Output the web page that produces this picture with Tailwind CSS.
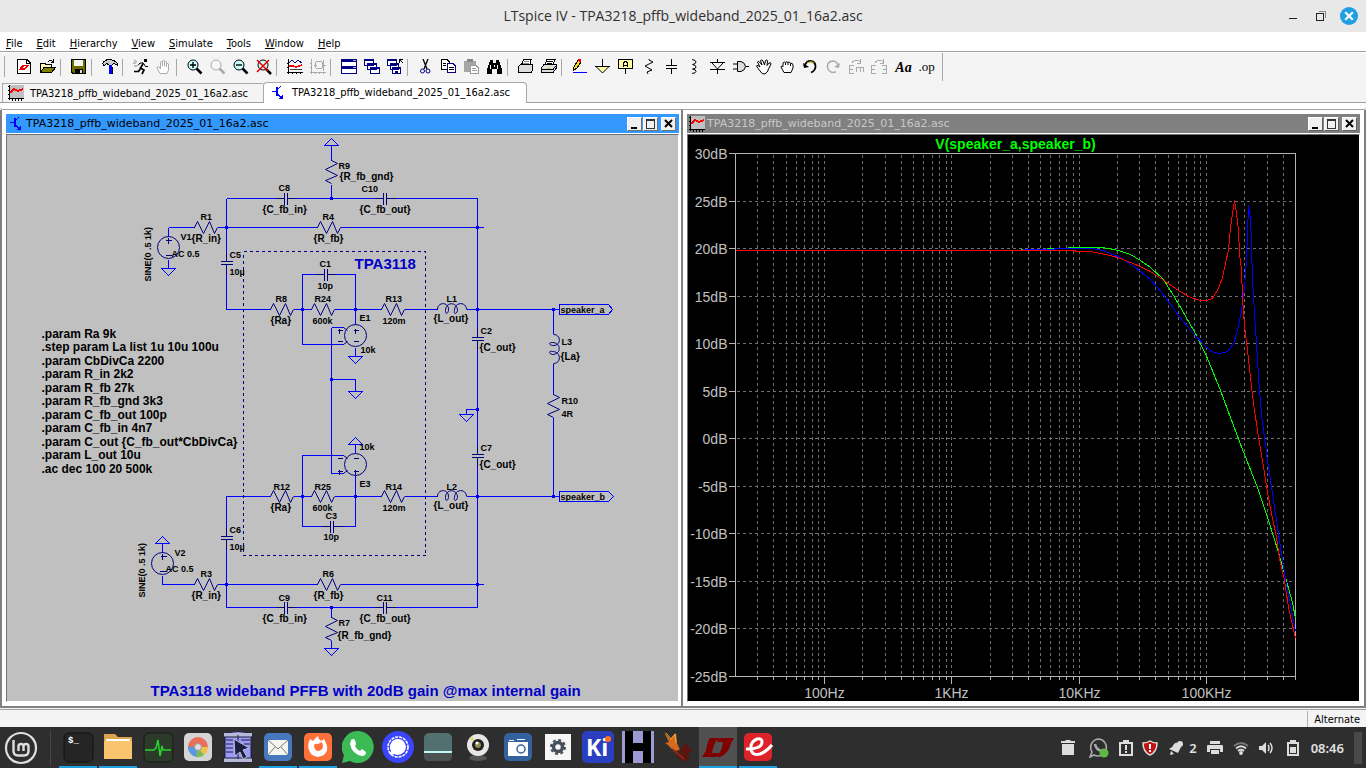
<!DOCTYPE html>
<html lang="en">
<head>
<meta charset="utf-8">
<title>LTspice IV</title>
<script src="https://cdn.jsdelivr.net/npm/@tailwindcss/browser@4"></script>
</head>
<body class="flex h-screen flex-col overflow-hidden bg-[#f4f4f4] font-['DejaVu_Sans_Condensed','DejaVu_Sans',sans-serif] text-[11px] leading-4 text-black">

<header class="grid h-8 shrink-0 grid-cols-[1fr_auto_1fr] items-center bg-[#e8e8e8]">
  <span></span>
  <h1 class="font-['Open_Sans',sans-serif] text-[14px] font-medium text-[#303030]">LTspice IV - TPA3218_pffb_wideband_2025_01_16a2.asc</h1>
  <div class="flex items-center justify-end gap-3 pr-2">
    <button aria-label="Minimize" class="size-4"><svg viewBox="0 0 16 16" class="size-4" shape-rendering="crispEdges"><path d="M5 10h8v1H5z" fill="#222"/></svg></button>
    <button aria-label="Restore" class="size-4"><svg viewBox="0 0 16 16" class="size-4" shape-rendering="crispEdges" fill="none"><path d="M7 3.500H13.500V10" stroke="#888"/><path d="M4.500 5.500H11.500V12.500H4.500z" stroke="#222"/></svg></button>
    <button aria-label="Close" class="size-[18px]"><svg viewBox="0 0 18 18" class="size-[18px]"><circle cx="9" cy="9" r="9" fill="#1d9fe2"/><path d="M6 6l6 6M12 6l-6 6" stroke="#fff" stroke-width="2.200" stroke-linecap="square"/></svg></button>
  </div>
</header>

<nav class="flex h-5 shrink-0 items-center gap-[14px] border-b border-[#a0a0a0] bg-white px-[6px] pt-1">
  <button><u>F</u>ile</button><button><u>E</u>dit</button><button><u>H</u>ierarchy</button><button><u>V</u>iew</button><button><u>S</u>imulate</button><button><u>T</u>ools</button><button><u>W</u>indow</button><button><u>H</u>elp</button>
</nav>

<div class="flex h-[30px] shrink-0 items-start border-t border-white pt-[6px] [&_button]:w-[23px] [&_button]:shrink-0 [&_button]:pl-1 [&_hr]:ml-px [&_hr]:mr-[6px] [&_hr]:h-[17px] [&_hr]:w-px [&_hr]:shrink-0 [&_hr]:border-0 [&_hr]:bg-[#a8a8a8] [&_svg]:size-4" role="toolbar">
  <span class="ml-1 mr-2 h-[21px] w-px -mt-[3px] bg-[#a8a8a8]"></span>
  <button aria-label="New schematic"><svg viewBox="0 0 16 16" shape-rendering="crispEdges"><path d="M.500 .500H10L13.500 4V14.500H.500z" fill="#fff" stroke="#000"/><path d="M9.500 .500V4.500H13.500" fill="none" stroke="#000"/><path d="M2 11l3-5h3L6 9h3l-2 2zM6 6h6L9 10H7L9 7z" fill="#e00"/></svg></button>
  <button aria-label="Open"><svg viewBox="0 0 16 16" shape-rendering="crispEdges"><path d="M.500 13V4.500H5L6 5.500H11.500V8" fill="#fffbb0" stroke="#000"/><path d="M.500 13.500L4 8.500H15.500L11.500 13.500z" fill="#808000" stroke="#000"/><path d="M8 2.500Q11 0 13 3M13.500 0V3.500H11" fill="none" stroke="#000"/></svg></button>
  <hr>
  <button aria-label="Save"><svg viewBox="0 0 16 16" shape-rendering="crispEdges"><path d="M.500 .500H14.500V14.500H2L.500 13z" fill="#6b6b00" stroke="#000"/><path d="M3 1h9v6H3z" fill="#f4f4f4"/><path d="M4 10h8v5H4z" fill="#000"/><path d="M9 11h2v3H9z" fill="#ddd"/></svg></button>
  <hr>
  <button aria-label="Control panel"><svg viewBox="0 0 16 16" shape-rendering="crispEdges"><path d="M.500 4.500Q3 .500 7 .500 12 .500 15.500 4.500V6L12 4.500 10 6H7L5 4.500 2 6.500z" fill="#ccc" stroke="#000"/><path d="M7 6h3v9H7z" fill="#00e"/><path d="M10.500 8V15" stroke="#000"/></svg></button>
  <hr>
  <button aria-label="Run"><svg viewBox="0 0 16 16"><path d="M11 0h3v3h-3z"/><path d="M10.500 4L7.500 9 11 11 9 15M7.500 9.500L5.500 12.500H1" fill="none" stroke="#000" stroke-width="1.700"/><path d="M10 4H7L5 6.500M11 5L12.500 7.500H15" fill="none" stroke="#000"/><path d="M1 1l3 2M0 4h3M1 7h3" stroke="#888"/></svg></button>
  <button aria-label="Halt"><svg viewBox="0 0 16 16" fill="#fff" stroke="#aaa"><path d="M4 14.500L1 9Q1 7 3 8L4.500 10V3Q5.500 2 6.500 3V7 2Q7.500 0 8.500 2V7 3Q9.500 1 10.500 3V8 5Q12 3.500 12.500 5V11L11 14.500z"/></svg></button>
  <hr>
  <button aria-label="Zoom in"><svg viewBox="0 0 16 16"><path d="M9.500 9.500L14.500 14.500" stroke="#000" stroke-width="2.500"/><circle cx="6" cy="6" r="5" fill="#cff" stroke="#000"/><path d="M3 6h6M6 3v6" stroke="#000" stroke-width="1.400"/></svg></button>
  <button aria-label="Pan"><svg viewBox="0 0 16 16"><path d="M9.500 9.500L14.500 14.500" stroke="#aaa" stroke-width="2.500"/><circle cx="6" cy="6" r="5" fill="#f8f8f8" stroke="#aaa"/></svg></button>
  <button aria-label="Zoom out"><svg viewBox="0 0 16 16"><path d="M9.500 9.500L14.500 14.500" stroke="#000" stroke-width="2.500"/><circle cx="6" cy="6" r="5" fill="#cff" stroke="#000"/><path d="M3 6h6" stroke="#000" stroke-width="1.400"/></svg></button>
  <button aria-label="Zoom to fit"><svg viewBox="0 0 16 16"><path d="M9.500 9.500L15 15" stroke="#000" stroke-width="2.500"/><circle cx="7" cy="6" r="5" fill="#cff" stroke="#000"/><path d="M1 1l11 11M13 1L1 13" stroke="#e00" stroke-width="1.600"/></svg></button>
  <hr>
  <button aria-label="Autorange"><svg viewBox="0 0 16 16" shape-rendering="crispEdges" fill="none"><path d="M1.500 0V15M0 13.500H16M0 4.500H2M0 8.500H2M5.500 13V15M9.500 13V15M13.500 13V15" stroke="#000"/><path d="M2 4L5 1 8 4 11 1 15 4" stroke="#000080"/><path d="M2 7H6L9 8 15 6" stroke="#e00" stroke-width="1.500"/><path d="M3 11L6 10 9 11 15 10" stroke="#444"/></svg></button>
  <button aria-label="Plot settings"><svg viewBox="0 0 16 16" shape-rendering="crispEdges" fill="none" stroke="#aaa"><path d="M1.500 0V15M0 13.500H16M0 4.500H2M0 8.500H2M5.500 13V15M9.500 13V15M13.500 13V15M4 6.500H7M13 1V12M13 6H16"/><circle cx="9" cy="6" r="4"/></svg></button>
  <hr>
  <button aria-label="Tile"><svg viewBox="0 0 16 16" shape-rendering="crispEdges"><path d="M0 0h16v15H0z" fill="#000080"/><path d="M1 3h14v4H1zM1 10h14v4H1z" fill="#fff"/><path d="M12 1h3v1h-3zM12 8h3v1h-3z" fill="#aac"/></svg></button>
  <button aria-label="Cascade"><svg viewBox="0 0 16 16" shape-rendering="crispEdges" fill="#fff" stroke="#000080"><path d="M.500 .500h9v6h-9zM3.500 4.500h9v6h-9zM6.500 8.500h9v6h-9z"/><path d="M0 1h10M3 5h10M6 9h10" stroke-width="2"/></svg></button>
  <button aria-label="Close all"><svg viewBox="0 0 16 16" shape-rendering="crispEdges" fill="#fff" stroke="#000080"><path d="M.500 .500h9v6h-9zM3.500 4.500h8v6h-8zM5.500 8.500h8v6h-8z"/><path d="M0 1h10M3 5h9M5 9h9M8 12.500h3" stroke-width="2"/><path d="M12 0l4 4M12.500 4V.500H16" stroke="#000" stroke-width="1" fill="none"/></svg></button>
  <hr>
  <button aria-label="Cut"><svg viewBox="0 0 16 16" fill="none"><path d="M5 0L9 10M10 0L6 10" stroke="#000" stroke-width="1.300"/><circle cx="4.500" cy="12" r="2" stroke="#000080"/><circle cx="10" cy="12" r="2" stroke="#000080"/></svg></button>
  <button aria-label="Copy"><svg viewBox="0 0 16 16" shape-rendering="crispEdges" fill="#fff"><path d="M.500 .500H6L8.500 3V10.500H.500z" stroke="#000"/><path d="M6.500 4.500H12L14.500 7V13.500H6.500z" stroke="#000080"/><path d="M2 4.500h3M2 6.500h3M8 8.500h5M8 10.500h5" stroke="#000"/></svg></button>
  <button aria-label="Paste"><svg viewBox="0 0 16 16" shape-rendering="crispEdges"><path d="M0 2h12v11H0z" fill="#a6a6a6"/><path d="M3 0h6v3H3z" fill="#888"/><path d="M6.500 6.500H12L14.500 9V14.500H6.500z" fill="#fff" stroke="#999"/><path d="M8 9.500h4M8 11.500h5" stroke="#999"/></svg></button>
  <button aria-label="Find"><svg viewBox="0 0 16 16" shape-rendering="crispEdges"><path d="M3 1h3v3h3V1h3l1 4 2 5v5h-5v-5H5v5H0v-5l2-5z"/><path d="M3 6h1v4H3zM10 6h1v4h-1zM7 6h1v2H7z" fill="#fff"/></svg></button>
  <hr>
  <button aria-label="Print setup"><svg viewBox="0 0 16 16" shape-rendering="crispEdges"><path d="M3.500 6L5.500 .500H13L12 6" fill="#fff" stroke="#000"/><path d="M.500 7.500L2.500 5.500H14.500V11L13 13.500H.500z" fill="#ddd" stroke="#000"/><path d="M0 13.500H14" stroke="#000" stroke-width="1"/><path d="M6 2.500h5M5 4.500h6" stroke="#888"/></svg></button>
  <button aria-label="Print"><svg viewBox="0 0 16 16" shape-rendering="crispEdges"><path d="M4 5L6 .500H14L12 6" fill="#fff" stroke="#000"/><path d="M.500 8.500L3 5.500H15.500V9L12 13.500H.500z" fill="#ddd" stroke="#000"/><path d="M1 10.500H12L15 7M6 2.500h6M6 4.500h5" fill="none" stroke="#000"/><path d="M6 9h3v1H6z" fill="#cc0"/></svg></button>
  <hr>
  <button aria-label="Wire"><svg viewBox="0 0 16 16" shape-rendering="crispEdges"><path d="M1.500 11.500L2 8 6 1 9 3 5 9z" fill="#fd0" stroke="#000"/><path d="M6 0h3v3H7z" fill="#e00"/><path d="M1 13.500H15" stroke="#00f"/></svg></button>
  <button aria-label="Ground"><svg viewBox="0 0 16 16"><path d="M2 8h11l-5.500 5.500z" fill="#ffffa0"/><path d="M7.500 0V7M0 7.500H15M1.500 8L7.500 14 13.500 8" fill="none" stroke="#000"/></svg></button>
  <button aria-label="Label net"><svg viewBox="0 0 16 16" shape-rendering="crispEdges"><path d="M.500 .500h14v9H.500z" fill="#ffffa0" stroke="#000"/><path d="M7.500 10V15M5.500 8V4Q7.500 1 9.500 4V8M5.500 6H10" fill="none" stroke="#000"/></svg></button>
  <button aria-label="Resistor"><svg viewBox="0 0 16 16" fill="none" stroke="#000"><path d="M8 0V1L12 3 4 7 11 11 6 13 7 15"/></svg></button>
  <button aria-label="Capacitor"><svg viewBox="0 0 16 16" shape-rendering="crispEdges" fill="none" stroke="#000"><path d="M7.500 0V6M2 6.500H13M2 9.500H13M7.500 10V15"/></svg></button>
  <button aria-label="Inductor"><svg viewBox="0 0 16 16" fill="none" stroke="#000"><path d="M5 .500Q9 1 9 3 9 5 5.500 5.500 9 6 9 8 9 10 5.500 10 9 10.500 9 12.500 9 14 5 14.500"/></svg></button>
  <button aria-label="Diode"><svg viewBox="0 0 16 16" fill="none" stroke="#000"><path d="M7.500 0V4M7.500 10V15M0 3.500H15M2 4L7.500 10 13 4M0 10.500H15"/></svg></button>
  <button aria-label="Component"><svg viewBox="0 0 16 16" fill="#ddd" stroke="#000"><path d="M4.500 2.500H8Q12 3.500 12.500 7.500 12 11.500 8 12.500H4.500zM0 5H4.500M0 10H4.500M12.500 7.500H16"/></svg></button>
  <button aria-label="Move"><svg viewBox="0 0 16 16" fill="#fff" stroke="#000"><path d="M6 14.500L1 8Q0 6 2 6.500L4 8 1.500 3Q2 1.500 3.500 3L6 6 4.500 1.500Q6 0 7 2L8.500 6 9.500 1.500Q11 0 11.500 2L11 6.500 13 4Q15 3 15 5L12 11V12L9 15z"/></svg></button>
  <button aria-label="Drag"><svg viewBox="0 0 16 16" fill="#fff" stroke="#000"><path d="M5 13.500L2 8Q2 6.500 4 7.500V4Q5.500 2 6.500 4 7 1.500 9 3.500 10.500 2 11.500 4.500 13.500 3.500 14 6V9L12 13.500zM6.500 4V6M9 3.500V6M11.500 4.500V7"/></svg></button>
  <button aria-label="Undo"><svg viewBox="0 0 16 16" fill="none"><path d="M2.500 7Q4 2 8.500 2 14 3 13.500 8 13 12 9 13.500" stroke="#000" stroke-width="1.800"/><path d="M5 4Q9 1 12 4" stroke="#cc0"/><path d="M1 4L2 9 7 8z" fill="#000"/></svg></button>
  <button aria-label="Redo"><svg viewBox="0 0 16 16" fill="none"><path d="M13.500 7Q12 2 7.500 2 2 3 2.500 8 3 12 7 13.500L11 13" stroke="#aaa" stroke-width="1.500"/><path d="M15 4L14 9 9 8z" fill="#aaa"/></svg></button>
  <button aria-label="Rotate"><svg viewBox="0 0 16 16" shape-rendering="crispEdges" fill="none" stroke="#aaa"><path d="M6 6H1.500V14H6M1 10.500H5M8 13V8.500H16M12 8V13M15.500 8V13M4 3.500Q8 -1 12 3M12.500 0V4H9"/></svg></button>
  <button aria-label="Mirror"><svg viewBox="0 0 16 16" shape-rendering="crispEdges" fill="none" stroke="#aaa"><path d="M5 6H.500V14H5M0 10.500H4M11 6H15.500V14H11M12 10.500H16M4 3.500Q8 -1 12 3M12.500 0V4H9"/></svg></button>
  <button aria-label="Text" class="font-['Liberation_Serif',serif] text-[14px] font-bold italic leading-[18px]">Aa</button>
  <button aria-label="SPICE directive" class="font-['Liberation_Serif',serif] text-[13px] leading-4">.op</button>
  <span class="ml-[6px] h-7 w-px -mt-[6px] bg-[#a8a8a8]"></span>
</div>

<div class="flex h-[21px] shrink-0 items-end border-b border-[#a0a0a0] pl-[2px]" role="tablist">
  <button role="tab" class="flex h-[19px] w-[261px] items-center gap-[6px] border-l border-t border-[#a8a8a8] pl-[5px]">
    <svg class="size-4" viewBox="0 0 16 16" shape-rendering="crispEdges"><path d="M2 0h14v14H2z" fill="#c0c0c0"/><path d="M1.500 0V15M0 13.500H16M0 1.500H2M0 5.500H2M0 9.500H2M4.500 13V16M7.500 13V16M10.500 13V16M13.500 13V16" stroke="#000"/><path d="M2 8L6 4 10 6 15 4" fill="none" stroke="#f00" stroke-width="2"/></svg>
    <span class="pt-px">TPA3218_pffb_wideband_2025_01_16a2.asc</span>
  </button>
  <button role="tab" aria-selected="true" class="-mb-px flex h-[21px] w-[264px] items-center gap-[6px] rounded-t-sm border border-b-0 border-[#a8a8a8] bg-white pb-px pl-[6px]">
    <svg class="size-4" viewBox="0 0 16 16" shape-rendering="crispEdges" fill="none" stroke="#00f"><path d="M2 6.500H6"/><path d="M6.500 2V11" stroke-width="2"/><path d="M7 5L11 1M7 8L12 14"/><path d="M10 13h2v-2z" fill="#00f"/></svg>
    <span>TPA3218_pffb_wideband_2025_01_16a2.asc</span>
  </button>
</div>
<div class="h-[7px] shrink-0 rounded border-b border-[#a0a0a0] bg-white"></div>

<main class="flex min-h-0 flex-1 bg-white">
  <section class="flex min-w-0 flex-1 flex-col border-x-2 border-b-2 border-[#808080] bg-white px-1 pb-1 pt-1 pr-[2px]">
    <div class="flex h-[19px] shrink-0 items-center bg-[#3399ff] pl-1 pr-[3px]">
      <svg class="size-4" viewBox="0 0 16 16" shape-rendering="crispEdges" fill="none" stroke="#00f"><path d="M0 6.500H4"/><path d="M4.500 2V11" stroke-width="2"/><path d="M5 5L9 1M5 8L10 14"/><path d="M8 13h2v-2z" fill="#00f"/></svg>
      <h2 class="flex-1 pt-px font-['DejaVu_Sans',sans-serif] text-[11px]">TPA3218_pffb_wideband_2025_01_16a2.asc</h2>
      <button aria-label="Minimize" class="h-[14px] w-[15px] border border-white border-b-[#707070] border-r-[#707070] bg-[#f0f0f0]"><svg viewBox="0 0 13 12" shape-rendering="crispEdges"><path d="M3 9h6v2H3z"/></svg></button>
      <button aria-label="Maximize" class="ml-px h-[14px] w-[15px] border border-white border-b-[#707070] border-r-[#707070] bg-[#f0f0f0]"><svg viewBox="0 0 13 12" shape-rendering="crispEdges"><path d="M2 1h9v2H2zM2 3h1v8H2zM10 3h1v8h-1zM2 10h9v1H2z" fill="#333"/></svg></button>
      <button aria-label="Close" class="ml-[3px] h-[14px] w-[15px] border border-white border-b-[#707070] border-r-[#707070] bg-[#f0f0f0]"><svg viewBox="0 0 13 12"><path d="M3 2l7 7M10 2l-7 7" stroke="#000" stroke-width="2"/></svg></button>
    </div>
    <div class="mt-px flex min-h-0 flex-1 border border-[#707070] border-b-white border-r-white bg-[#c0c0c0]">
      <svg class="h-full w-full font-['Liberation_Sans',sans-serif] font-bold" viewBox="6.500 134.500 671 566" fill="none" role="img" aria-label="Schematic">
        <defs>
          <path id="res" d="M0 0L3 -6 9 6 15 -6 20 6 23 0"/>
          <path id="cap" d="M-9 0H0M0 -6V6M3 -6V6M3 0H12"/>
          <path id="ind" d="M0 0C0 -8 12 -8 11 1 10 5 8 5 8 1 8 -8 20 -8 20 1 19 5 16 5 17 1 17 -8 29 -8 29 0"/>
          <path id="gnd" d="M-7 0H7L0 7z"/>
          <path id="dot" d="M-1 -1h2v2h-2z" fill="#00f"/>
        </defs>
        <g stroke="#00f" shape-rendering="crispEdges">
          <path d="M331 145V160M331 184V198M226 198H283M286 198H383M386 198H477V337M168 227H194M217 227H317M340 227H483M168 227V236M168 259V268M226 198V261M226 264V309H270M293 309H311M334 309H381M404 309H437M466 309H559M302 309V274H324M327 274H355V324M302 309V344H343M331 327H343M331 327V473H343M331 379H355V391M355 347V356M477 340V454M477 457V607M477 409H466V414M553 309V333M553 363V394M553 417V496M466 496H559M404 496H437M334 496H381M293 496H311M270 496H226V536M226 539V607H283M286 607H383M386 607H477M302 496V455H343M302 496V526H330M333 526H355V475M355 444V452M162 543V552M162 575V584H194M217 584H317M340 584H483M331 607V617M331 640V648"/>
          <use href="#gnd" x="168" y="268"/><use href="#gnd" x="355" y="356"/><use href="#gnd" x="355" y="391"/><use href="#gnd" x="466" y="414"/><use href="#gnd" x="331" y="648"/>
          <use href="#gnd" transform="translate(331 145) scale(1 -1)"/><use href="#gnd" transform="translate(355 444) scale(1 -1)"/><use href="#gnd" transform="translate(162 543) scale(1 -1)"/>
          <use href="#dot" x="331" y="198"/><use href="#dot" x="226" y="227"/><use href="#dot" x="477" y="227"/><use href="#dot" x="302" y="309"/><use href="#dot" x="355" y="309"/><use href="#dot" x="477" y="309"/><use href="#dot" x="553" y="309"/><use href="#dot" x="331" y="379"/><use href="#dot" x="477" y="409"/><use href="#dot" x="302" y="496"/><use href="#dot" x="355" y="496"/><use href="#dot" x="477" y="496"/><use href="#dot" x="553" y="496"/><use href="#dot" x="226" y="584"/><use href="#dot" x="477" y="584"/><use href="#dot" x="331" y="607"/>
          <path d="M559 304H608L612 309 608 314H559zM559 491H608L613 496 608 501H559z"/>
        </g>
        <g stroke="#000080" shape-rendering="crispEdges">
          <use href="#cap" x="284" y="198"/><use href="#cap" x="383" y="198"/><use href="#cap" x="324" y="274"/><use href="#cap" x="330" y="526"/><use href="#cap" x="284" y="607"/><use href="#cap" x="383" y="607"/>
          <use href="#cap" transform="translate(226 261) rotate(90)"/><use href="#cap" transform="translate(477 337) rotate(90)"/><use href="#cap" transform="translate(477 454) rotate(90)"/><use href="#cap" transform="translate(226 536) rotate(90)"/>
          <path d="M243 251H425V555H243z" stroke-dasharray="3 3"/>
          <path d="M165 240h6M168 237v6M165 255h6M160 556h6M162 553v6M159 571h6M353 330h5M355 328v5M353 341h5M337 330h5M339 328v5M337 341h5M353 458h5M353 471h5M355 469v5M337 458h5M337 471h5M339 469v5"/>
        </g>
        <g stroke="#000080">
          <use href="#res" x="194" y="227"/><use href="#res" x="317" y="227"/><use href="#res" x="270" y="309"/><use href="#res" x="311" y="309"/><use href="#res" x="381" y="309"/><use href="#res" x="270" y="496"/><use href="#res" x="311" y="496"/><use href="#res" x="381" y="496"/><use href="#res" x="194" y="584"/><use href="#res" x="317" y="584"/>
          <use href="#res" transform="translate(331 160) rotate(90)"/><use href="#res" transform="translate(331 617) rotate(90)"/><use href="#res" transform="translate(553 394) rotate(90)"/>
          <use href="#ind" x="437" y="309"/><use href="#ind" x="437" y="496"/><use href="#ind" transform="translate(553 334) rotate(90)"/>
          <circle cx="168" cy="247" r="11"/><circle cx="162" cy="563" r="11"/><circle cx="355" cy="335" r="11"/><circle cx="355" cy="464" r="11"/>
          <path d="M343 327L347 330M343 344L347 341M343 455L347 458M343 473L347 470"/>
        </g>
        <g class="fill-black text-[9px]">
          <text x="338" y="168">R9</text><text x="278" y="190">C8</text><text x="361" y="191">C10</text><text x="200" y="219">R1</text><text x="180" y="239">V1</text><text x="171" y="256">AC 0.5</text><text x="322" y="219">R4</text><text x="229" y="257">C5</text><text x="229" y="274">10µ</text><text x="319" y="266">C1</text><text x="317" y="288">10p</text><text x="275" y="301">R8</text><text x="314" y="301">R24</text><text x="385" y="301">R13</text><text x="312" y="323">600k</text><text x="382" y="323">120m</text><text x="359" y="320">E1</text><text x="360" y="352">10k</text>
          <text x="446" y="301">L1</text><text x="480" y="333">C2</text><text x="561" y="344">L3</text><text x="561" y="403">R10</text><text x="561" y="416">4R</text><text x="560" y="312">speaker_a</text><text x="480" y="450">C7</text><text x="446" y="489">L2</text><text x="560" y="499">speaker_b</text>
          <text x="359" y="449">10k</text><text x="359" y="486">E3</text><text x="273" y="489">R12</text><text x="314" y="489">R25</text><text x="385" y="489">R14</text><text x="312" y="510">600k</text><text x="382" y="510">120m</text><text x="325" y="518">C3</text><text x="323" y="539">10p</text><text x="229" y="532">C6</text><text x="229" y="549">10µ</text><text x="174" y="555">V2</text><text x="165" y="571">AC 0.5</text><text x="200" y="576">R3</text><text x="322" y="576">R6</text><text x="278" y="600">C9</text><text x="376" y="600">C11</text><text x="338" y="625">R7</text>
          <text transform="translate(150 281) rotate(-90)">SINE(0 .5 1k)</text><text transform="translate(144 597) rotate(-90)">SINE(0 .5 1k)</text>
        </g>
        <g class="fill-black text-[10px]">
          <text x="339" y="179">{R_fb_gnd}</text><text x="262" y="212">{C_fb_in}</text><text x="359" y="212">{C_fb_out}</text><text x="191" y="241">{R_in}</text><text x="313" y="241">{R_fb}</text><text x="270" y="323">{Ra}</text><text x="433" y="321">{L_out}</text><text x="479" y="350">{C_out}</text><text x="560" y="359">{La}</text><text x="479" y="467">{C_out}</text><text x="433" y="508">{L_out}</text><text x="270" y="510">{Ra}</text><text x="191" y="598">{R_in}</text><text x="313" y="598">{R_fb}</text><text x="262" y="621">{C_fb_in}</text><text x="359" y="621">{C_fb_out}</text><text x="337" y="638">{R_fb_gnd}</text>
        </g>
        <g class="fill-black text-[12px]">
          <text x="41" y="337">.param Ra 9k</text><text x="41" y="350">.step param La list 1u 10u 100u</text><text x="41" y="364">.param CbDivCa 2200</text><text x="41" y="377">.param R_in 2k2</text><text x="41" y="391">.param R_fb 27k</text><text x="41" y="404">.param R_fb_gnd 3k3</text><text x="41" y="418">.param C_fb_out 100p</text><text x="41" y="431">.param C_fb_in 4n7</text><text x="41" y="445">.param C_out {C_fb_out*CbDivCa}</text><text x="41" y="458">.param L_out 10u</text><text x="41" y="472">.ac dec 100 20 500k</text>
        </g>
        <g class="fill-[#0000c8] text-[15px]"><text x="354" y="268">TPA3118</text><text x="150" y="695">TPA3118 wideband PFFB with 20dB gain @max internal gain</text></g>
      </svg>
    </div>
  </section>

  <section class="flex min-w-0 flex-1 flex-col border-b-2 border-r-2 border-[#808080] bg-white pb-1 pl-1 pr-1 pt-1">
    <div class="flex h-[19px] shrink-0 items-center bg-[#808080] pl-[2px] pr-[3px]">
      <svg class="size-4" viewBox="0 0 16 16" shape-rendering="crispEdges"><path d="M2 0h14v14H2z" fill="#c0c0c0"/><path d="M1.500 0V15M0 13.500H16M0 1.500H2M0 5.500H2M0 9.500H2M4.500 13V16M7.500 13V16M10.500 13V16M13.500 13V16" stroke="#000"/><path d="M2 8L6 4 10 6 15 4" fill="none" stroke="#f00" stroke-width="2"/></svg>
      <h2 class="flex-1 pl-[2px] pt-px font-['DejaVu_Sans',sans-serif] text-[11px] text-[#c8c8c8]">TPA3218_pffb_wideband_2025_01_16a2.asc</h2>
      <button aria-label="Minimize" class="h-[14px] w-[15px] border border-white border-b-[#606060] border-r-[#606060] bg-[#f0f0f0]"><svg viewBox="0 0 13 12" shape-rendering="crispEdges"><path d="M3 9h6v2H3z"/></svg></button>
      <button aria-label="Maximize" class="ml-px h-[14px] w-[15px] border border-white border-b-[#606060] border-r-[#606060] bg-[#f0f0f0]"><svg viewBox="0 0 13 12" shape-rendering="crispEdges"><path d="M2 1h9v2H2zM2 3h1v8H2zM10 3h1v8h-1zM2 10h9v1H2z" fill="#333"/></svg></button>
      <button aria-label="Close" class="ml-[3px] h-[14px] w-[15px] border border-white border-b-[#606060] border-r-[#606060] bg-[#f0f0f0]"><svg viewBox="0 0 13 12"><path d="M3 2l7 7M10 2l-7 7" stroke="#000" stroke-width="2"/></svg></button>
    </div>
    <div class="mt-px flex min-h-0 flex-1 border border-[#707070] border-b-white border-r-white bg-black">
      <svg class="h-full w-full font-['Liberation_Sans',sans-serif] text-[14px]" viewBox="687.500 134.500 671 566" fill="none" role="img" aria-label="Gain plot">
        <g shape-rendering="crispEdges">
          <path id="grid" stroke="#707070" stroke-dasharray="3 3"/>
          <path id="ticks" stroke="#b4b4b4"/>
          <path d="M735 153H1295V676H735z" stroke="#b4b4b4"/>
        </g>
        <g shape-rendering="crispEdges" stroke-linejoin="round">
          <path stroke="#0f0" d="M1020 249H1047V248H1068V247H1100L1108 248 1118 250 1130 254 1140 260 1150 267 1163 279 1173 295 1183 312 1195 333 1207 358 1220 390 1230 417 1242 449 1257 487 1268 520 1278 552 1285 577 1292 602 1295 618"/>
          <path stroke="#00f" d="M1022 249H1054V248H1090L1098 249 1105 251 1112 254 1120 257 1135 267 1150 279 1157 287 1165 297 1178 315 1192 332 1205 346 1213 352 1220 353 1227 351 1233 343 1237 330 1241 310 1244 287 1246 260 1247 233 1248 205 1250 217 1251 243 1252 280 1254 313 1256 343 1258 377 1261 413 1264 437 1267 460 1272 493 1276 520 1280 547 1284 573 1289 600 1295 631"/>
          <path stroke="#f00" d="M735 250H1075V251H1090L1100 253 1110 255 1120 258 1135 264 1150 271 1162 279 1178 290 1190 297 1200 300H1206L1212 298 1218 288 1222 277 1225 263 1228 249 1230 227 1232 213 1234 200 1236 213 1238 230 1239 253 1241 270 1242 297 1244 325 1247 350 1250 377 1253 403 1257 430 1262 460 1267 492 1271 513 1276 537 1279 558 1284 580 1288 607 1295 638"/>
        </g>
        <text x="1015" y="148" text-anchor="middle" class="fill-[#00ff00] font-bold">V(speaker_a,speaker_b)</text>
        <g class="fill-[#c0c0c0]" text-anchor="end">
          <text x="727" y="158">30dB</text><text x="727" y="206">25dB</text><text x="727" y="253">20dB</text><text x="727" y="301">15dB</text><text x="727" y="348">10dB</text><text x="727" y="396">5dB</text><text x="727" y="443">0dB</text><text x="727" y="491">-5dB</text><text x="727" y="538">-10dB</text><text x="727" y="586">-15dB</text><text x="727" y="633">-20dB</text><text x="727" y="681">-25dB</text>
        </g>
        <g class="fill-[#c0c0c0]" text-anchor="middle"><text x="824" y="697">100Hz</text><text x="951" y="697">1KHz</text><text x="1079" y="697">10KHz</text><text x="1206" y="697">100KHz</text></g>
      </svg>
    </div>
  </section>
</main>

<footer class="mt-px flex h-[18px] shrink-0 justify-end border-t border-[#a0a0a0]"><span class="mt-px border-l border-[#b0b0b0] pl-[6px] pr-[6px] pt-px">Alternate</span></footer>

<div class="flex h-[41px] shrink-0 items-center bg-[#2e2e2e] text-white">
  <button aria-label="Menu" class="ml-1 w-[46px]"><svg class="size-[34px]" viewBox="0 0 34 34" fill="none" stroke="#dedede"><circle cx="17" cy="17" r="15" stroke-width="2.200"/><path d="M9.500 9V20Q9.500 24.500 14 24.500H20Q24.500 24.500 24.500 20V15.500Q24.500 13 22 13T19.500 15.500V20M19.500 15.500Q19.500 13 17 13T14.500 15.500V20" stroke-width="2.400"/></svg></button>
  <span class="mr-2 h-9 w-px bg-[#454545]"></span>
  <div class="flex h-full gap-[2px] [&_button]:flex [&_button]:w-[38px] [&_button]:items-center [&_button]:justify-center [&_button]:border-b-2 [&_button]:border-transparent [&_svg]:size-8">
    <button aria-label="Terminal" class="!border-[#1d9fe2]"><svg viewBox="0 0 32 32"><rect x="2" y="2" width="29" height="29" rx="5" fill="#252525" stroke="#111"/><text x="6" y="12" class="fill-white font-['Liberation_Mono',monospace] text-[9px] font-bold">$_</text></svg></button>
    <button aria-label="Files" class="!border-[#1d9fe2]"><svg viewBox="0 0 32 32"><path d="M2 3h11l3 3h14v10H2z" fill="#dca24c"/><path d="M4 8h24v4H4z" fill="#fff"/><path d="M2 10h28v18H2z" fill="#fac36e"/></svg></button>
    <button aria-label="System monitor"><svg viewBox="0 0 32 32"><rect x="2" y="2" width="29" height="29" rx="5" fill="#2c3a2a" stroke="#151a14"/><path d="M3 19H12L14 17 16 9 18 25 20 15 21 19H29" fill="none" stroke="#2bd42b" stroke-width="1.500"/></svg></button>
    <button aria-label="Disk usage"><svg viewBox="0 0 32 32"><rect x="2" y="2" width="28" height="28" rx="5" fill="#d5d5d5"/><path d="M16 16V26A10 10 0 0 1 6 15z" fill="#5b97e0"/><path d="M6 16A10 10 0 0 1 26 16H16z" fill="#e96f5a"/><path d="M16 16H26A10 10 0 0 1 22 24z" fill="#f1c04b"/><path d="M16 16L22 24A10 10 0 0 1 14 26z" fill="#7cbc55"/><circle cx="16" cy="16" r="3.500" fill="#ddd" stroke="#999"/></svg></button>
    <button aria-label="Input tool"><svg viewBox="0 0 32 32"><path d="M3 2Q16 -1 29 2L31 5 29 7V26L31 28 28 31H4L1 28 3 26V6L1 5z" fill="#9b9bf5" stroke="#1d1d40"/><path d="M2 2h28v4H2zM2 27h28v4H2z" fill="#b8b8d8"/><path d="M4 9h7M4 13h7M4 17h7M4 21h7M16 4V28M19 9h9M22 13h6M2 27h28M2 6h28" stroke="#1d1d40"/><path d="M12 8L27 17 21 19 25 26 21 28 18 21 13 25z" fill="#1d1d40" stroke="#b8b8d8"/></svg></button>
    <button aria-label="Mail" class="!border-[#1d9fe2]"><svg viewBox="0 0 32 32"><rect x="2" y="2" width="28" height="28" rx="5" fill="#4778bd"/><path d="M6 9h20v15H6z" fill="#f4f4f0"/><path d="M6 9L16 18 26 9M6 24L13 16M26 24L19 16" fill="none" stroke="#777"/></svg></button>
    <button aria-label="Firefox" class="!border-[#1d9fe2]"><svg viewBox="0 0 32 32"><rect x="2" y="2" width="28" height="28" rx="5" fill="#ff7139"/><path d="M8 8L11 10Q13 7 16 5 16 8 19 10L22 8Q28 18 23 23 16 29 9 23 4 16 8 8z" fill="#fff"/><path d="M12 14Q14 12 16 13L20 11Q23 18 17 20 12 20 12 14z" fill="#ff7139"/></svg></button>
    <button aria-label="WhatsApp"><svg viewBox="0 0 32 32"><path d="M16 0A16 16 0 1 1 8 30L0 32 2 24A16 16 0 0 1 16 0z" fill="#3cba56"/><path d="M9 9Q11 7 13 9L14 13 13 15Q15 19 18 20L20 18 24 21Q24 25 20 25 10 23 8 13z" fill="#fff"/></svg></button>
    <button aria-label="Signal"><svg viewBox="0 0 32 32"><circle cx="16" cy="16" r="16" fill="#3b45fd"/><circle cx="16" cy="16" r="10" fill="none" stroke="#fff" stroke-width="1.600" stroke-dasharray="3 1"/><path d="M16 8A8 8 0 1 1 12 23L8 24 9 20A8 8 0 0 1 16 8z" fill="#fff"/></svg></button>
    <button aria-label="Scanner"><svg viewBox="0 0 32 32"><rect x="2" y="2" width="28" height="28" rx="5" fill="#52706f"/><path d="M2 21h28v4q0 5-5 5H7q-5 0-5-5z" fill="#4c5252"/><path d="M2 21h28" stroke="#bff6f6" stroke-width="2"/></svg></button>
    <button aria-label="Webcam"><svg viewBox="0 0 32 32"><ellipse cx="16" cy="27" rx="9" ry="3" fill="#555"/><circle cx="16" cy="14" r="11" fill="#e6e6e6"/><circle cx="16" cy="14" r="6" fill="#222"/><circle cx="16" cy="14" r="3" fill="#8f8d50"/><circle cx="15" cy="12" r="1.500" fill="#fff"/><circle cx="10" cy="8" r="1.500" fill="#dd3"/></svg></button>
    <button aria-label="Camera"><svg viewBox="0 0 32 32"><rect x="2" y="2" width="28" height="28" rx="5" fill="#34629f"/><path d="M6 11h20v14H6zM15 8h8v1h-8zM7 9h5v1H7z" fill="#fff"/><circle cx="19" cy="18" r="4" fill="#fff" stroke="#34629f" stroke-width="1.500"/></svg></button>
    <button aria-label="Settings"><svg viewBox="0 0 32 32"><path d="M3 3h26v26H3z" fill="#f6f6f6"/><circle cx="16" cy="16" r="4.500" fill="none" stroke="#45505c" stroke-width="3.500"/><circle cx="16" cy="16" r="7" fill="none" stroke="#45505c" stroke-width="2" stroke-dasharray="3 2.500"/></svg></button>
    <button aria-label="KiCad"><svg viewBox="0 0 32 32"><rect width="32" height="32" rx="5" fill="#2a3fc0"/><text x="4" y="25" class="fill-white font-['Open_Sans',sans-serif] text-[23px] font-bold">Ki</text><circle cx="26" cy="8" r="3" fill="#ff7417"/></svg></button>
    <button aria-label="H tool"><svg viewBox="0 0 32 32"><path d="M0 0h32v32H0z" fill="#9c9ad2"/><path d="M3 0h8v12h10V0h8v32h-8V20H11v12H3z" fill="#000"/></svg></button>
    <button aria-label="Arrows tool"><svg viewBox="0 0 32 32"><path d="M2 1L8 8 14 2 15 12 18 19 12 20 6 14 3 12 7 11z" fill="#d36a1c"/><path d="M4 2L9 8 13 3 14 12" fill="none" stroke="#f3b243"/><path d="M17 19L24 12 31 21H27V28L20 31 14 24 18 23z" fill="#5a1611"/><path d="M10 18L22 28" stroke="#8a2a18" stroke-width="2"/></svg></button>
    <button aria-label="LTspice" class="!border-[#1d9fe2] bg-[#505050]"><svg viewBox="0 0 32 32" fill="#800000"><path d="M8 7H18Q17 9 14 10Q11 15 10 22H17L14 26H0L4 20Q5 11 8 7z"/><path d="M18 7H32L29 12Q27 22 18 26 15 27 15 24 20 21 21 11H15z"/></svg></button>
    <button aria-label="E viewer" class="!border-[#1d9fe2]"><svg viewBox="0 0 32 32"><rect x="2" y="2" width="28" height="28" rx="5" fill="#dd2329"/><path d="M4 18Q20 18 20 11 20 7 15 8 8 11 9 18 10 25 18 23 24 21 30 14" fill="none" stroke="#fff" stroke-width="3"/></svg></button>
  </div>
  <div class="ml-auto flex items-center gap-[10px] font-['Noto_Sans',sans-serif] text-[13px] font-semibold text-[#e0e0e0] [&_svg]:size-4 [&_button]:shrink-0">
    <button aria-label="Trash" class="mr-1"><svg viewBox="0 0 16 16" fill="#ddd"><path d="M1 1h4l1-1h4l1 1h4v2H1zM2 4h12v11H2z"/></svg></button>
    <button aria-label="WhatsApp status" class="-ml-px"><svg class="!size-5" viewBox="0 0 20 20" fill="none"><path d="M10 1A8.500 8.500 0 1 1 5 17L1 19 3 14A8.500 8.500 0 0 1 10 1z" stroke="#aaa" stroke-width="1.600"/><path d="M6 6Q7 12 13 13" stroke="#aaa" stroke-width="2.500"/><circle cx="15" cy="15" r="4.500" fill="#5cba4a"/></svg></button>
    <button aria-label="Clipboard" class="-ml-px"><svg viewBox="0 0 16 16"><path d="M2 3H14V15H2z" fill="none" stroke="#ddd" stroke-width="2"/><path d="M5 0h6v4H5zM7 5h2v5H7zM7 11h2v2H7z" fill="#ddd"/></svg></button>
    <button aria-label="Updates" class="-ml-[2px]"><svg viewBox="0 0 16 16"><path d="M8 1Q11 3 15 3 15 12 8 15 1 12 1 3 5 3 8 1z" fill="#c01414" stroke="#ddd" stroke-width="1.500"/><path d="M7 4h2v5H7zM7 10h2v2H7z" fill="#fff"/></svg></button>
    <button aria-label="2 notifications" class="flex items-center gap-[5px]"><svg viewBox="0 0 16 16" fill="#ddd"><path d="M1 9Q5 7 6 4 8 2 10 3L13 7Q12 9 10 13z"/><circle cx="12" cy="4" r="3"/><path d="M3 11l3 3-4 1z"/></svg><span>2</span></button>
    <button aria-label="Printer"><svg viewBox="0 0 16 16" fill="#ddd"><path d="M3 1h10v3H3zM1 5h14q1 0 1 1v6h-3V9H3v3H0V6q0-1 1-1zM4 10h8v4H4z"/></svg></button>
    <button aria-label="Wi-Fi"><svg viewBox="0 0 16 16" fill="none" stroke="#ddd" stroke-width="1.800"><path d="M1 6Q8 0 15 6" stroke="#777"/><path d="M3 8.500Q8 4 13 8.500M5 11Q8 8.500 11 11"/><circle cx="8" cy="13" r="1" fill="#ddd"/></svg></button>
    <button aria-label="Volume"><svg viewBox="0 0 16 16" fill="none" stroke="#ddd"><path d="M0 6h3l4-4v12l-4-4H0z" fill="#ddd" stroke="none"/><path d="M9 5Q11 8 9 11M11 3Q15 8 11 13" stroke-width="1.500"/></svg></button>
    <button aria-label="Battery"><svg viewBox="0 0 16 16" fill="#ddd"><path d="M5 0h6v2h3v14H2V2h3zM4 4v10h8V4z" fill-rule="evenodd"/><path d="M5 7h6v6H5z"/></svg></button>
    <time class="mr-[2px]">08:46</time>
    <button aria-label="Show desktop" class="-ml-[2px] mr-1 h-8 w-2 bg-[#4a4a4a]"></button>
  </div>
</div>

<script>
  // Logarithmic frequency grid from 20 Hz to 500 kHz, gain grid in 5 dB steps.
  const xOf = f => Math.round(735 + 560 * Math.log10(f / 20) / Math.log10(25000));
  let grid = '', ticks = '';
  for (let decade = 10; decade <= 100000; decade *= 10)
    for (let m = 1; m < 10; m++) {
      const f = decade * m;
      if (f <= 20 || f >= 500000) continue;
      grid += `M${xOf(f)} 154V676`;
      ticks += `M${xOf(f)} 676V${m === 1 ? 683 : 679}`;
    }
  for (let i = 0; i <= 11; i++) {
    const y = Math.round(153 + i * 523 / 11);
    if (i > 0 && i < 11) grid += `M736 ${y}H1295`;
    ticks += `M728 ${y}H735`;
  }
  document.getElementById('grid').setAttribute('d', grid);
  document.getElementById('ticks').setAttribute('d', ticks + 'M1295 676V679');
</script>
</body>
</html>
